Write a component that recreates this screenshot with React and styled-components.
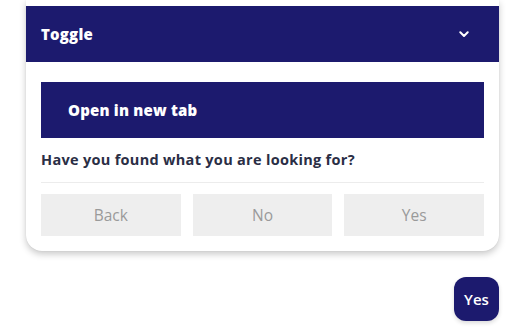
import React from "react";
import styled, { createGlobalStyle } from "styled-components";

const Global = createGlobalStyle`
  html, body { margin: 0; padding: 0; background: #fff; }
  body { font-family: "Open Sans", "Liberation Sans", sans-serif; }
`;

const NAVY = "#1c1a6e";

const Page = styled.div`
  width: 522px;
  height: 327px;
  overflow: hidden;
  padding-left: 26px;
  box-sizing: border-box;
`;

const Column = styled.div`
  width: 473px;
  display: flex;
  flex-direction: column;
`;

const Card = styled.div`
  background: #fff;
  padding-top: 6px;
  border-radius: 0 0 16px 16px;
  box-shadow: 0 3px 7px rgba(0, 0, 0, 0.22), 0 0 1px rgba(0, 0, 0, 0.12);
  display: flex;
  flex-direction: column;
`;

const ToggleBar = styled.div`
  height: 56px;
  background: ${NAVY};
  color: #fff;
  display: flex;
  align-items: center;
  justify-content: space-between;
  padding: 0 30px 0 15px;
  font-family: "Open Sans", sans-serif;
  font-weight: 800;
  font-size: 15px;
  letter-spacing: 0.2px;
`;

const Body = styled.div`
  padding: 20px 15px 15px;
  display: flex;
  flex-direction: column;
`;

const LinkButton = styled.div`
  height: 56px;
  background: ${NAVY};
  color: #fff;
  display: flex;
  align-items: center;
  padding-left: 27px;
  font-family: "Open Sans", sans-serif;
  font-weight: 800;
  font-size: 15px;
  letter-spacing: 0.2px;
`;

const Question = styled.div`
  margin-top: 12px;
  padding-bottom: 13px;
  border-bottom: 1px solid #ececec;
  color: #2a2e45;
  font-family: "Open Sans", sans-serif;
  font-weight: 700;
  font-size: 14.5px;
  letter-spacing: 0.3px;
`;

const ButtonRow = styled.div`
  margin-top: 11px;
  display: grid;
  grid-template-columns: 1fr 1fr 1fr;
  gap: 12px;
`;

const ChoiceButton = styled.div`
  height: 42px;
  background: #eeeeee;
  color: #9a9a9a;
  display: flex;
  align-items: center;
  justify-content: center;
  font-family: "Open Sans", sans-serif;
  font-size: 15.5px;
`;

const BubbleRow = styled.div`
  margin-top: 26px;
  display: flex;
  justify-content: flex-end;
`;

const Bubble = styled.div`
  width: 45px;
  height: 44px;
  border-radius: 12px;
  background: ${NAVY};
  color: #fff;
  display: flex;
  align-items: center;
  justify-content: center;
  font-family: "Open Sans", sans-serif;
  font-weight: 600;
  font-size: 15px;
  box-shadow: 0 2px 4px rgba(0, 0, 0, 0.15);
`;

const Chevron = () => (
  <svg width="10" height="7" viewBox="0 0 10 7">
    <path d="M1.3 1.3 L5 5 L8.7 1.3" fill="none" stroke="#fff" strokeWidth="2" strokeLinecap="round" strokeLinejoin="round" />
  </svg>
);

export default function App() {
  return (
    <>
      <Global />
      <Page>
        <Column>
          <Card>
            <ToggleBar>
              <span>Toggle</span>
              <Chevron />
            </ToggleBar>
            <Body>
              <LinkButton>Open in new tab</LinkButton>
              <Question>Have you found what you are looking for?</Question>
              <ButtonRow>
                <ChoiceButton>Back</ChoiceButton>
                <ChoiceButton>No</ChoiceButton>
                <ChoiceButton>Yes</ChoiceButton>
              </ButtonRow>
            </Body>
          </Card>
          <BubbleRow>
            <Bubble>Yes</Bubble>
          </BubbleRow>
        </Column>
      </Page>
    </>
  );
}
